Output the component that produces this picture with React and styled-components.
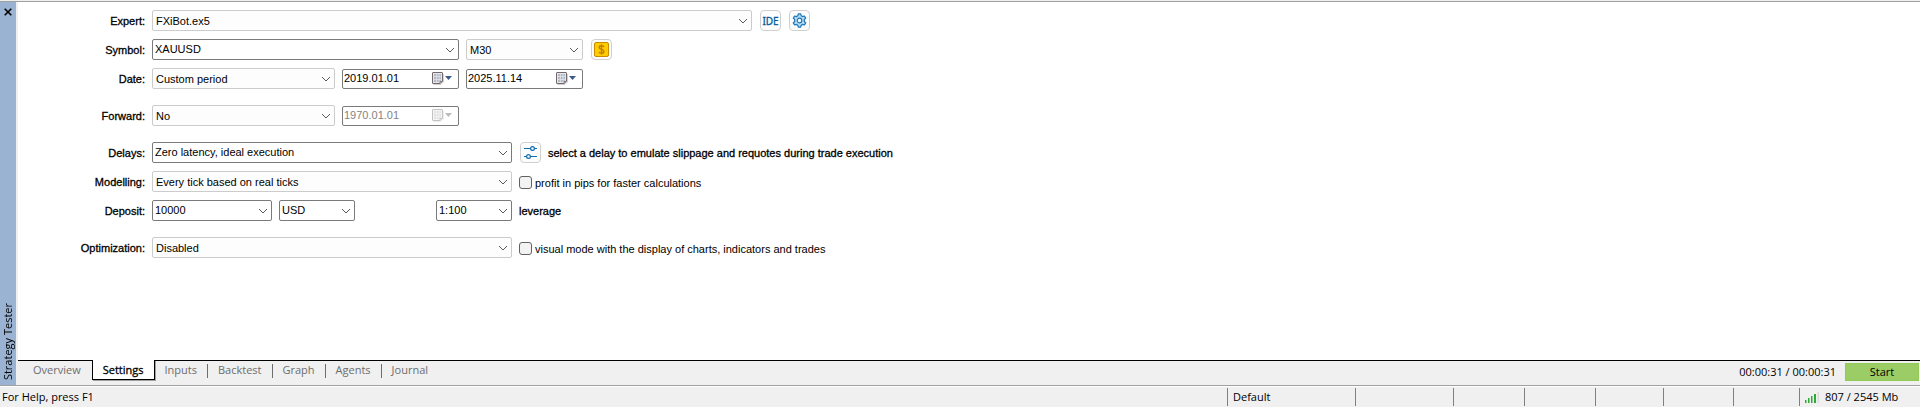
import React from 'react';
import styled, { createGlobalStyle, css } from 'styled-components';

const GlobalStyle = createGlobalStyle`
  * {
    box-sizing: border-box;
  }
  body {
    margin: 0;
    background: #f0f0f0;
    color: #000000;
    font-family: 'Open Sans', 'Noto Sans', sans-serif;
    font-size: 11px;
    line-height: 16px;
  }
  button,
  input,
  select {
    font: inherit;
    color: inherit;
    margin: 0;
  }
`;

const Window = styled.div`
  display: flex;
  flex-direction: column;
  min-height: 100vh;
  padding-top: 1px;
`;

const Tester = styled.section`
  display: flex;
  flex: 1;
  border-top: 1px solid #a0a0a0;
`;

const TitleBar = styled.header`
  display: flex;
  flex-direction: column;
  justify-content: space-between;
  align-items: center;
  width: 16px;
  padding: 6px 0 5px;
  background: #9bb3d2;
`;

const CloseButton = styled.button`
  display: flex;
  padding: 0;
  border: none;
  background: none;
`;

const Title = styled.h1`
  margin: 0;
  font-size: 11px;
  font-weight: 400;
  line-height: 16px;
  writing-mode: vertical-rl;
  transform: rotate(180deg);
`;

const Content = styled.div`
  display: flex;
  flex: 1;
  flex-direction: column;
  min-width: 0;
  margin-left: 2px;
`;

const Form = styled.form`
  display: flex;
  flex: 1;
  flex-direction: column;
  gap: 8px;
  padding: 8px 0;
  background: #ffffff;
  font-family: 'Liberation Sans', Arial, sans-serif;
  font-size: 11px;
`;

const Row = styled.div`
  display: flex;
  align-items: center;
  height: 21px;
  margin-top: ${({ $spaced }) => ($spaced ? '8px' : '0')};
`;

const RowLabel = styled.label`
  width: 127px;
  margin-right: 7px;
  text-align: right;
  -webkit-text-stroke: 0.3px #000000;
`;

const Note = styled.span`
  margin-left: 7px;
  -webkit-text-stroke: 0.3px #000000;
`;

const field = css`
  height: 21px;
  border: 1px solid ${({ $editable }) => ($editable ? '#7a7a7a' : '#cccccc')};
  border-radius: 2px;
  background: ${({ $editable }) => ($editable ? '#ffffff' : '#fdfdfd')};
`;

const SelectBox = styled.div`
  display: grid;
  grid-template-columns: 1fr 19px;
  align-items: center;
  width: ${({ $width }) => $width}px;
  margin-right: ${({ $gap }) => $gap || 0}px;

  svg {
    grid-area: 1 / 2;
    justify-self: center;
    pointer-events: none;
  }
`;

const StyledSelect = styled.select`
  ${field}
  grid-area: 1 / 1 / 2 / 3;
  width: 100%;
  padding: ${({ $editable }) => ($editable ? '0 20px 2px 2px' : '0 20px 0 3px')};
  appearance: none;
`;

const DateBox = styled.div`
  ${field}
  display: flex;
  align-items: center;
  width: 117px;
  height: 20px;
  margin-right: 7px;
  padding-right: 5px;
`;

const DateInput = styled.input`
  flex: 1;
  min-width: 0;
  padding: 0 0 1px 1px;
  border: none;
  background: none;

  &:disabled {
    color: #838383;
  }
`;

const CalendarButton = styled.button`
  display: flex;
  padding: 0;
  border: none;
  background: none;

  &:disabled {
    opacity: 0.4;
    filter: grayscale(1);
  }
`;

const ToolButton = styled.button`
  display: flex;
  align-items: center;
  justify-content: center;
  width: 21px;
  height: 21px;
  margin-left: 8px;
  padding: 0;
  border: 1px solid #d0d0d0;
  border-radius: 4px;
  background: #fdfdfd;
  color: #005a9e;
  font-family: 'Noto Sans', sans-serif;
  font-size: 10px;
  -webkit-text-stroke: 0.3px #005a9e;
`;

const CheckLabel = styled.label`
  display: flex;
  align-items: center;
  gap: 3px;
  margin-left: 7px;
  padding-top: 2px;
`;

const Checkbox = styled.input`
  width: 13px;
  height: 13px;
  border: 1px solid #626262;
  border-radius: 3px;
  background: #f3f3f3;
  appearance: none;

  &:checked {
    background: #005fb8;
  }
`;

const TabBar = styled.footer`
  display: flex;
  justify-content: space-between;
  height: 25px;
  border-top: 1px solid #000000;
`;

const Tabs = styled.nav`
  display: flex;
  align-items: flex-start;
  margin-top: -1px;
  padding-left: 5px;
`;

const Tab = styled.button`
  display: flex;
  align-items: center;
  height: 20px;
  padding: 2px 0 0;
  border: none;
  background: none;
  color: #6d6d6d;

  span {
    padding: 0 10px 2px;
    line-height: 12px;
    border-right: 1px solid ${({ $divider }) => ($divider ? '#6d6d6d' : 'transparent')};
  }

  ${({ $active }) =>
    $active &&
    css`
      border: 1px solid #000000;
      border-top: none;
      background: #ffffff;
      color: #000000;
      box-shadow: 1px 1px 0 #a0a0a0;
      -webkit-text-stroke: 0.3px #000000;

      span {
        border: none;
      }
    `}
`;

const RunPanel = styled.div`
  display: flex;
  align-items: center;
  gap: 9px;
  padding: 0 1px 2px 0;
`;

const StartButton = styled.button`
  width: 74px;
  height: 18px;
  padding: 0;
  border: 1px solid #92c957;
  background: #9ccc65;
  line-height: 16px;
`;

const StatusBar = styled.footer`
  display: flex;
  height: 22px;
  padding: 2px 0 1px;
  border-top: 1px solid #a0a0a0;
  box-shadow: inset 0 1px 0 #ffffff;
`;

const StatusCell = styled.div`
  display: flex;
  align-items: center;
  gap: 6px;
  flex: ${({ $width }) => ($width ? `0 0 ${$width}px` : '1')};
  padding-left: ${({ $width }) => ($width ? '5px' : '2px')};
  border-left: ${({ $width }) => ($width ? '1px solid #808080' : 'none')};
  white-space: nowrap;
`;

const Chevron = () => (
  <svg width="10" height="6" viewBox="0 0 10 6" fill="none" stroke="#5a5a5a" aria-hidden="true">
    <path d="M1 1l4 4 4-4" />
  </svg>
);

const CloseIcon = () => (
  <svg width="8" height="8" viewBox="0 0 8 8" stroke="#000000" strokeWidth="1.6">
    <path d="M0.7 0.7l6.6 6.6M7.3 0.7L0.7 7.3" />
  </svg>
);

const CalendarIcon = () => (
  <svg width="21" height="13" viewBox="0 0 21 13">
    <path d="M1.500 12.500H9l2.500-2.500V2" fill="none" stroke="#d0d0d0" />
    <path d="M1 .5h9a.5.5 0 0 1 .5.5v8L8 11.500H1a.5.5 0 0 1-.5-.5V1A.5.5 0 0 1 1 .5z" fill="#e4e8ee" stroke="#75686b" />
    <path d="M2 2h7v8H2z" fill="#b3bac6" />
    <path d="M2 4.500h7M2 7.500h7M4.500 2v8M7 2v8" stroke="#e4e8ee" strokeWidth=".7" />
    <path d="M8 11.500V9.500h2.500z" fill="#ffffff" stroke="#75686b" strokeWidth=".8" />
    <path d="M13 4h7l-3.500 4z" fill="#3d5a8c" />
  </svg>
);

const GearIcon = () => (
  <svg width="15" height="15" viewBox="0 0 15 15" fill="#b5dcf5" stroke="#1b75b5" strokeWidth="1.200" strokeLinejoin="round">
    <path d="M6.300.9h2.400l.5 1.900 1.300.8 1.900-.6 1.300 2.100-1.400 1.400v2l1.400 1.400-1.300 2.100-1.900-.6-1.300.8-.5 1.900H6.300l-.5-1.900-1.300-.8-1.900.6-1.300-2.100 1.400-1.400v-2L1.300 5.100 2.600 3l1.900.6 1.300-.8z" />
    <circle cx="7.500" cy="7.500" r="2.300" fill="#ffffff" />
  </svg>
);

const DollarIcon = () => (
  <svg width="15" height="15" viewBox="0 0 15 15">
    <rect x=".5" y=".5" width="14" height="14" rx="1.500" fill="#ffcc00" stroke="#c98a00" />
    <path d="M10 4.800C9.500 3.900 8.600 3.800 7.500 3.800c-1.400 0-2.300.6-2.300 1.700 0 2.600 4.700 1.300 4.700 3.900 0 1.200-1 1.800-2.400 1.800-1.200 0-2.100-.3-2.600-1.200M7.500 2.500v10" fill="none" stroke="#c27c00" strokeWidth="1.400" />
  </svg>
);

const DelayIcon = () => (
  <svg width="13" height="13" viewBox="0 0 13 13" fill="none" stroke="#0f6cad" strokeWidth="1.200">
    <path d="M0 2.500h6.500M10.500 2.500H13M0 10.500h2.500M6.500 10.500H13" />
    <circle cx="8.500" cy="2.500" r="1.900" />
    <circle cx="4.500" cy="10.500" r="1.900" />
  </svg>
);

const SignalIcon = () => (
  <svg width="14" height="11" viewBox="0 0 14 11" fill="#2ea836">
    <path d="M0 8h1.500v3H0zM3 6h1.500v5H3zM6 4h1.500v7H6zM9 2h2v9H9z" />
    <path d="M12.500 0H14v11h-1.500z" fill="#dcdcdc" />
  </svg>
);

const Select = ({ id, label, value, width, gap, editable }) => (
  <SelectBox $width={width} $gap={gap}>
    <StyledSelect id={id} aria-label={label} $editable={editable}>
      <option>{value}</option>
    </StyledSelect>
    <Chevron />
  </SelectBox>
);

const DateField = ({ label, value, disabled }) => (
  <DateBox $editable>
    <DateInput type="text" aria-label={label} defaultValue={value} disabled={disabled} />
    <CalendarButton type="button" aria-label={`Open ${label} calendar`} disabled={disabled}>
      <CalendarIcon />
    </CalendarButton>
  </DateBox>
);

const tabs = ['Overview', 'Settings', 'Inputs', 'Backtest', 'Graph', 'Agents', 'Journal'];
const dividers = ['Inputs', 'Backtest', 'Graph', 'Agents'];
const emptyCells = [98, 71, 71, 68, 70, 66];

const SettingsForm = () => (
  <Form>
    <Row>
      <RowLabel htmlFor="expert">Expert:</RowLabel>
      <Select id="expert" value="FXiBot.ex5" width={600} />
      <ToolButton type="button">IDE</ToolButton>
      <ToolButton type="button" aria-label="Expert settings">
        <GearIcon />
      </ToolButton>
    </Row>
    <Row>
      <RowLabel htmlFor="symbol">Symbol:</RowLabel>
      <Select id="symbol" value="XAUUSD" width={307} gap={7} editable />
      <Select label="Timeframe" value="M30" width={117} />
      <ToolButton type="button" aria-label="Symbol specification">
        <DollarIcon />
      </ToolButton>
    </Row>
    <Row>
      <RowLabel htmlFor="period">Date:</RowLabel>
      <Select id="period" value="Custom period" width={183} gap={7} />
      <DateField label="start date" value="2019.01.01" />
      <DateField label="end date" value="2025.11.14" />
    </Row>
    <Row $spaced>
      <RowLabel htmlFor="forward">Forward:</RowLabel>
      <Select id="forward" value="No" width={183} gap={7} />
      <DateField label="forward date" value="1970.01.01" disabled />
    </Row>
    <Row $spaced>
      <RowLabel htmlFor="delays">Delays:</RowLabel>
      <Select id="delays" value="Zero latency, ideal execution" width={360} editable />
      <ToolButton type="button" aria-label="Delay settings">
        <DelayIcon />
      </ToolButton>
      <Note>select a delay to emulate slippage and requotes during trade execution</Note>
    </Row>
    <Row>
      <RowLabel htmlFor="modelling">Modelling:</RowLabel>
      <Select id="modelling" value="Every tick based on real ticks" width={360} />
      <CheckLabel>
        <Checkbox type="checkbox" />
        profit in pips for faster calculations
      </CheckLabel>
    </Row>
    <Row>
      <RowLabel htmlFor="deposit">Deposit:</RowLabel>
      <Select id="deposit" value="10000" width={120} gap={7} editable />
      <Select label="Currency" value="USD" width={76} gap={81} editable />
      <Select label="Leverage" value="1:100" width={76} editable />
      <Note>leverage</Note>
    </Row>
    <Row $spaced>
      <RowLabel htmlFor="optimization">Optimization:</RowLabel>
      <Select id="optimization" value="Disabled" width={360} />
      <CheckLabel>
        <Checkbox type="checkbox" />
        visual mode with the display of charts, indicators and trades
      </CheckLabel>
    </Row>
  </Form>
);

const App = () => {
  const [activeTab, setActiveTab] = React.useState('Settings');

  return (
    <>
      <GlobalStyle />
      <Window>
        <Tester>
          <TitleBar>
            <CloseButton aria-label="Close">
              <CloseIcon />
            </CloseButton>
            <Title>Strategy Tester</Title>
          </TitleBar>
          <Content>
            <SettingsForm />
            <TabBar>
              <Tabs>
                {tabs.map((tab) => (
                  <Tab
                    key={tab}
                    $active={tab === activeTab}
                    $divider={dividers.includes(tab)}
                    onClick={() => setActiveTab(tab)}
                  >
                    <span>{tab}</span>
                  </Tab>
                ))}
              </Tabs>
              <RunPanel>
                <span>00:00:31 / 00:00:31</span>
                <StartButton>Start</StartButton>
              </RunPanel>
            </TabBar>
          </Content>
        </Tester>
        <StatusBar>
          <StatusCell>For Help, press F1</StatusCell>
          <StatusCell $width={128}>Default</StatusCell>
          {emptyCells.map((width, index) => (
            <StatusCell key={index} $width={width} />
          ))}
          <StatusCell $width={121}>
            <SignalIcon />
            807 / 2545 Mb
          </StatusCell>
        </StatusBar>
      </Window>
    </>
  );
};

export default App;
